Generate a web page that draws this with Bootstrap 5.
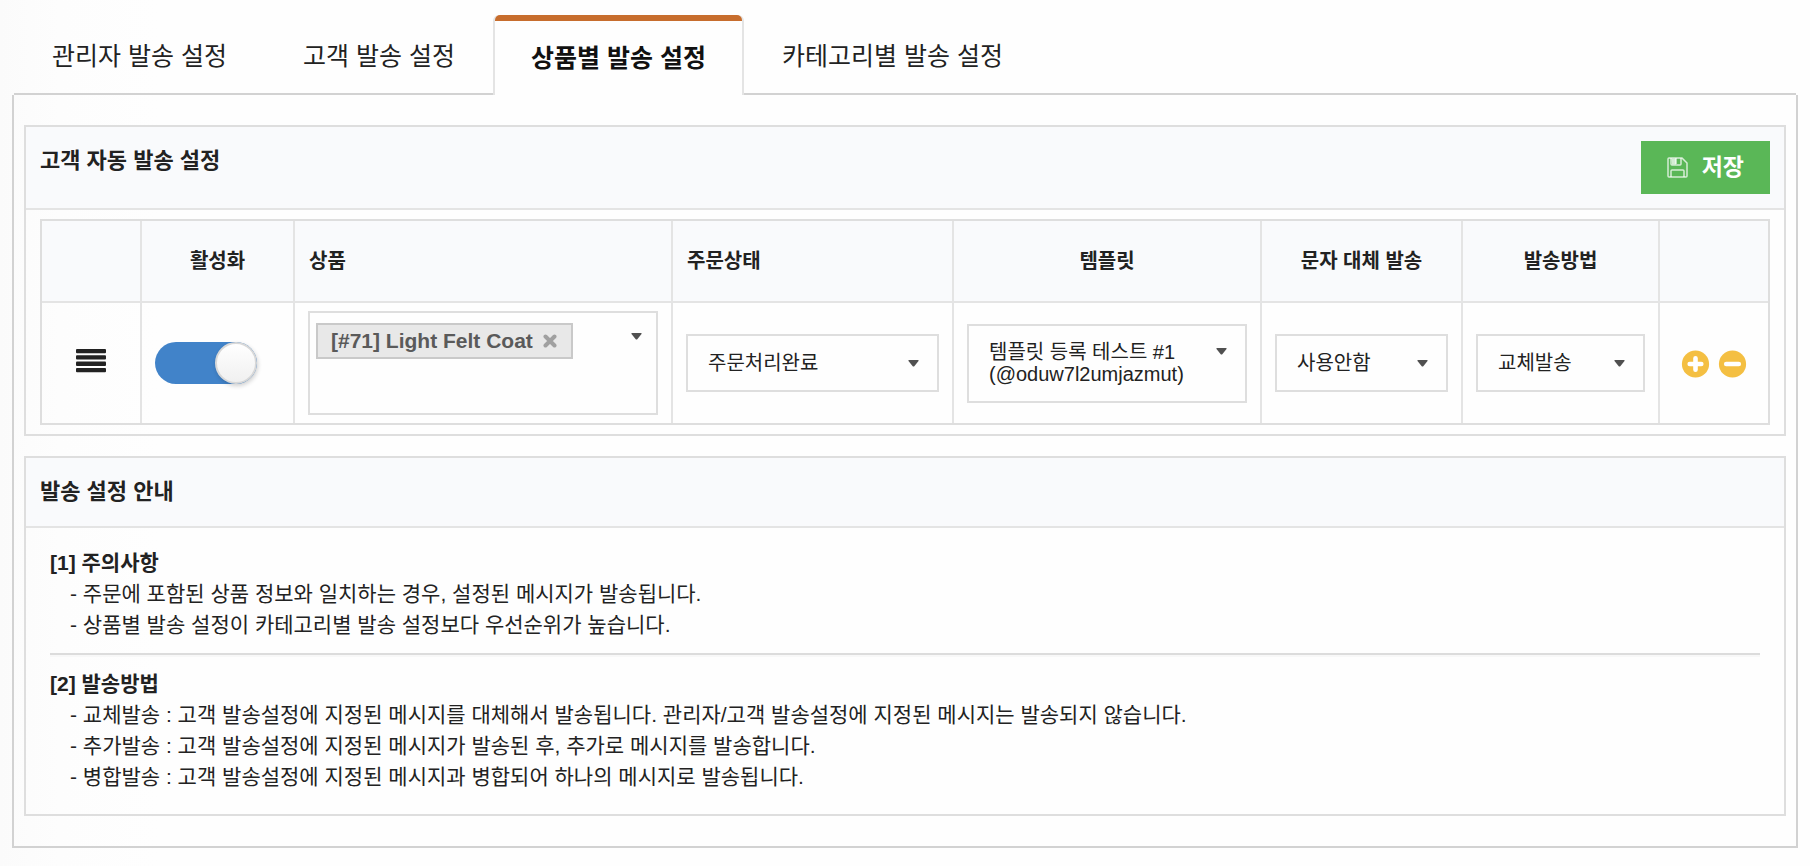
<!DOCTYPE html>
<html lang="ko">
<head>
<meta charset="utf-8">
<meta name="viewport" content="width=device-width, initial-scale=1">
<title>상품별 발송 설정</title>
<link href="https://cdn.jsdelivr.net/npm/bootstrap@5.3.0/dist/css/bootstrap.min.css" rel="stylesheet">
<style>
  :root {
    --line: #dedede;
    --line-soft: #e4e4e4;
    --line-strong: #d2d2d2;
    --head-bg: #f9fafc;
    --ink: #222;
  }
  body {
    font-family: "Liberation Sans", "Noto Sans CJK KR", sans-serif;
    font-size: 20px;
    line-height: 30px;
    color: var(--ink);
    background: linear-gradient(90deg, #fbfbfb 0, #fdfdfd 60px, #fefefe 160px);
    padding: 15px 12px 17px;
  }

  /* tabs */
  .send-tabs {
    --bs-nav-tabs-border-width: 2px;
    margin: 0 2px;
    border-bottom: 2px solid var(--line-strong);
    font-family: "Noto Sans CJK KR", sans-serif;
    font-size: 25px;
    line-height: 38px;
  }
  .send-tabs .nav-link {
    position: relative;
    padding: 20px 36px 22px;
    border: 0 solid transparent;
    border-width: 0 2px;
    margin-bottom: -2px;
    border-radius: 6px 6px 0 0;
    color: var(--ink);
  }
  .send-tabs .nav-link.active {
    padding: 22px 36px 20px;
    font-weight: 700;
    color: #111;
    background: #fefefe;
    border-color: var(--line-soft);
  }
  .send-tabs .nav-link.active::before {
    content: "";
    position: absolute;
    inset: 0 0 auto;
    height: 6px;
    border-radius: 5px 5px 0 0;
    background: #c76d2d;
  }
  .send-panel {
    border: 2px solid var(--line-strong);
    border-top: 0;
    padding: 30px 10px;
    gap: 20px;
  }

  /* boxes */
  .box { border: 2px solid var(--line); }
  .box-head {
    background: var(--head-bg);
    border-bottom: 2px solid var(--line-soft);
    padding: 14px;
  }
  .box-title { font-size: 22px; line-height: 40px; font-weight: 700; margin: 0; }
  .btn-save {
    --bs-btn-color: #fff;
    --bs-btn-bg: #5ab757;
    --bs-btn-hover-color: #fff;
    --bs-btn-hover-bg: #4da64a;
    --bs-btn-border-width: 0;
    --bs-btn-border-radius: 0;
    --bs-btn-font-size: 23px;
    --bs-btn-line-height: 33px;
    --bs-btn-font-weight: 700;
    --bs-btn-padding-x: 26px;
    --bs-btn-padding-y: 10px;
    gap: 14px;
  }

  /* rules table */
  .rules-wrap { padding: 9px 14px; }
  .rules {
    width: 100%;
    min-width: 1500px;
    table-layout: fixed;
    border-collapse: separate;
    border-spacing: 0;
    border: 2px solid var(--line);
  }
  .rules th, .rules td { vertical-align: middle; padding: 8px 13px; }
  .rules th + th, .rules td + td { border-left: 2px solid var(--line-soft); }
  .rules th {
    height: 82px;
    background: var(--head-bg);
    border-bottom: 2px solid var(--line-soft);
    padding: 8px 14px;
  }
  .w-handle { width: 98px; }
  .w-active { width: 153px; }
  .w-status { width: 281px; }
  .w-template { width: 308px; }
  .w-fallback { width: 201px; }
  .w-method { width: 197px; }
  .w-tools { width: 110px; }

  .plain-btn { border: 0; padding: 0; background: none; line-height: 0; color: inherit; }

  .toggle {
    appearance: none;
    display: block;
    width: 102px;
    height: 42px;
    margin: 0;
    border-radius: 21px;
    background: #c8c8c8;
    cursor: pointer;
  }
  .toggle::before {
    content: "";
    display: block;
    width: 42px;
    height: 42px;
    border-radius: 50%;
    border: 2px solid #d8d8d8;
    background: linear-gradient(#fff, #f0f0f0);
    box-shadow: 1px 2px 4px rgba(0, 0, 0, .18);
  }
  .toggle:checked { background: #4183c9; }
  .toggle:checked::before { margin-left: auto; }

  .field {
    display: block;
    width: 100%;
    border: 2px solid var(--line);
    border-radius: 0;
    background-color: #fefefe;
    color: var(--ink);
    text-align: left;
  }
  select.field {
    appearance: none;
    height: 58px;
    padding: 0 40px 0 20px;
    background-image: url("data:image/svg+xml,%3Csvg xmlns='http://www.w3.org/2000/svg' viewBox='0 0 11 7'%3E%3Cpath d='M1 0h9q1 0 .5 1L6.500 6q-1 1-2 0L.5 1Q0 0 1 0z' fill='%23505050'/%3E%3C/svg%3E");
    background-repeat: no-repeat;
    background-size: 11px 7px;
    background-position: right 18px center;
  }
  .template-field { padding: 15px 18px 16px 20px; line-height: 22px; }
  .template-field svg { margin-top: 7px; }
  .tag-field { min-height: 104px; padding: 10px 14px 10px 6px; }
  .tag-field .open-btn { margin-top: 10px; }
  .tag {
    height: 36px;
    padding: 0 14px 0 13px;
    gap: 10px;
    border: 2px solid #c9c9c9;
    background: #e8e8e8;
    color: #5a5a5a;
    font-size: 21px;
    font-weight: 700;
    line-height: 30px;
  }

  /* guide */
  .guide { padding: 19px 24px 22px; font-size: 21px; line-height: 31px; }
  .guide h3 { font-size: 21px; line-height: 31px; font-weight: 700; margin: 0; }
  .guide ul { margin: 0; }
  .guide hr {
    margin: 13px 0 11px;
    border-top: 2px solid #dcdcdc;
    border-bottom: 2px solid #f8f8f8;
    opacity: 1;
  }
</style>
</head>
<body>

<ul class="nav nav-tabs send-tabs">
  <li class="nav-item"><a class="nav-link" href="#admin">관리자 발송 설정</a></li>
  <li class="nav-item"><a class="nav-link" href="#customer">고객 발송 설정</a></li>
  <li class="nav-item"><a class="nav-link active" aria-current="page" href="#product">상품별 발송 설정</a></li>
  <li class="nav-item"><a class="nav-link" href="#category">카테고리별 발송 설정</a></li>
</ul>

<main class="send-panel d-flex flex-column">
  <section class="box">
    <header class="box-head d-flex justify-content-between align-items-start">
      <h2 class="box-title">고객 자동 발송 설정</h2>
      <button type="button" class="btn btn-save d-flex align-items-center">
        <svg width="21" height="21" viewBox="0 0 21 21" fill="none" stroke="#fff" stroke-opacity=".75" stroke-width="1.500" aria-hidden="true">
          <path d="M1 2q0-1 1-1h13l5 5v13q0 1-1 1H2q-1 0-1-1z"/>
          <path d="M4 1v6q0 1 1 1h8q1 0 1-1V1"/>
          <path d="M4.500 1.500h4.500v6H5z" fill="#fff" fill-opacity=".75" stroke="none"/>
          <path d="M9 1v6"/>
          <path d="M4 20v-6q0-1 1-1h11q1 0 1 1v6"/>
        </svg>
        <span>저장</span>
      </button>
    </header>

    <div class="rules-wrap table-responsive">
      <table class="rules">
        <colgroup>
          <col class="w-handle"><col class="w-active"><col><col class="w-status">
          <col class="w-template"><col class="w-fallback"><col class="w-method"><col class="w-tools">
        </colgroup>
        <thead>
          <tr>
            <th></th>
            <th class="text-center">활성화</th>
            <th>상품</th>
            <th>주문상태</th>
            <th class="text-center">템플릿</th>
            <th class="text-center">문자 대체 발송</th>
            <th class="text-center">발송방법</th>
            <th></th>
          </tr>
        </thead>
        <tbody>
          <tr>
            <td class="text-center">
              <button type="button" class="plain-btn pb-2" aria-label="순서 변경">
                <svg width="30" height="24" viewBox="0 0 30 24" fill="#222" aria-hidden="true">
                  <rect y="0" width="30" height="4.300" rx="1"/><rect y="6.300" width="30" height="4.300" rx="1"/>
                  <rect y="12.600" width="30" height="4.300" rx="1"/><rect y="18.900" width="30" height="4.300" rx="1"/>
                </svg>
              </button>
            </td>
            <td><input type="checkbox" class="toggle" role="switch" aria-label="활성화" checked></td>
            <td>
              <div class="field tag-field d-flex justify-content-between align-items-start">
                <div class="tag d-flex align-items-center">
                  <span>[#71] Light Felt Coat</span>
                  <button type="button" class="plain-btn" aria-label="삭제">
                    <svg width="14" height="14" viewBox="0 0 14 14" stroke="#a0a0a0" stroke-width="4" stroke-linecap="round" aria-hidden="true"><path d="M2.500 2.500l9 9M11.500 2.500l-9 9"/></svg>
                  </button>
                </div>
                <button type="button" class="plain-btn open-btn" aria-label="상품 선택">
                  <svg width="11" height="7" viewBox="0 0 11 7" fill="#505050" aria-hidden="true"><path d="M1 0h9q1 0 .5 1L6.500 6q-1 1-2 0L.5 1Q0 0 1 0z"/></svg>
                </button>
              </div>
            </td>
            <td>
              <select class="field" aria-label="주문상태"><option>주문처리완료</option></select>
            </td>
            <td>
              <button type="button" class="field template-field d-flex justify-content-between align-items-start" aria-haspopup="listbox" aria-label="템플릿">
                <span>템플릿 등록 테스트 #1<br>(@oduw7l2umjazmut)</span>
                <svg width="11" height="7" viewBox="0 0 11 7" fill="#505050" aria-hidden="true"><path d="M1 0h9q1 0 .5 1L6.500 6q-1 1-2 0L.5 1Q0 0 1 0z"/></svg>
              </button>
            </td>
            <td>
              <select class="field" aria-label="문자 대체 발송"><option>사용안함</option></select>
            </td>
            <td>
              <select class="field" aria-label="발송방법"><option>교체발송</option></select>
            </td>
            <td>
              <div class="d-flex justify-content-center gap-2">
                <button type="button" class="plain-btn" aria-label="추가">
                  <svg width="29" height="29" viewBox="0 0 29 29" aria-hidden="true"><circle cx="14.500" cy="15" r="13.600" fill="#f4bf42"/><path d="M14.500 9.200v11.600M8.700 15h11.600" stroke="#fff" stroke-width="4.600" stroke-linecap="round"/></svg>
                </button>
                <button type="button" class="plain-btn" aria-label="제거">
                  <svg width="29" height="29" viewBox="0 0 29 29" aria-hidden="true"><circle cx="14.500" cy="15" r="13.600" fill="#f4bf42"/><path d="M8.200 15h12.600" stroke="#fff" stroke-width="4.600" stroke-linecap="round"/></svg>
                </button>
              </div>
            </td>
          </tr>
        </tbody>
      </table>
    </div>
  </section>

  <section class="box">
    <header class="box-head">
      <h2 class="box-title">발송 설정 안내</h2>
    </header>
    <div class="guide">
      <h3>[1] 주의사항</h3>
      <ul class="list-unstyled ps-3 ms-1">
        <li>- 주문에 포함된 상품 정보와 일치하는 경우, 설정된 메시지가 발송됩니다.</li>
        <li>- 상품별 발송 설정이 카테고리별 발송 설정보다 우선순위가 높습니다.</li>
      </ul>
      <hr>
      <h3>[2] 발송방법</h3>
      <ul class="list-unstyled ps-3 ms-1">
        <li>- 교체발송 : 고객 발송설정에 지정된 메시지를 대체해서 발송됩니다. 관리자/고객 발송설정에 지정된 메시지는 발송되지 않습니다.</li>
        <li>- 추가발송 : 고객 발송설정에 지정된 메시지가 발송된 후, 추가로 메시지를 발송합니다.</li>
        <li>- 병합발송 : 고객 발송설정에 지정된 메시지과 병합되어 하나의 메시지로 발송됩니다.</li>
      </ul>
    </div>
  </section>
</main>

<script src="https://cdn.jsdelivr.net/npm/bootstrap@5.3.0/dist/js/bootstrap.bundle.min.js"></script>
</body>
</html>
